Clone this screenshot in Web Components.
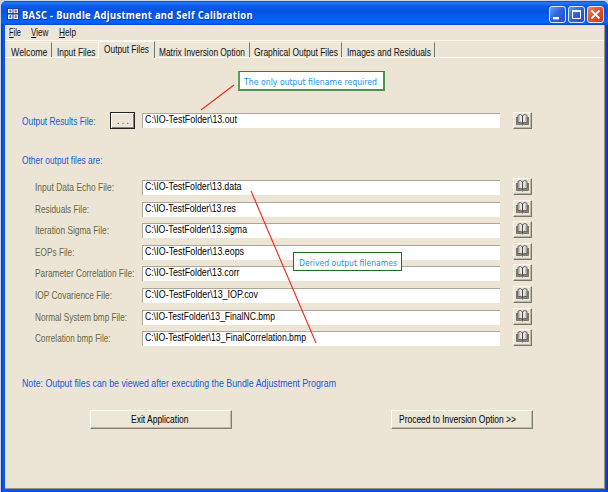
<!DOCTYPE html>
<html lang="en">
<head>
<meta charset="utf-8">
<title>BASC</title>
<style>
html,body{margin:0;width:608px;height:492px;overflow:hidden;background:#c9d3e6;font-family:"Liberation Sans",Arial,sans-serif;font-size:11px}
</style>
</head>
<body>
<basc-window></basc-window>
<script>
class Base extends HTMLElement{
  draw(html){ if(!this.shadowRoot) this.attachShadow({mode:'open'}).innerHTML=html; }
}

/* Single line of text condensed or stretched to the width in "w". */
customElements.define('fit-text',class extends Base{
  connectedCallback(){
    const w=+this.getAttribute('w');
    this.draw(`<style>:host{display:block;flex:none;width:${w}px;height:14px;line-height:14px;white-space:pre}
      span{display:inline-block;transform-origin:0 0}</style><span><slot></slot></span>`);
    const s=this.shadowRoot.querySelector('span');
    s.style.transform=`scaleX(${w/s.getBoundingClientRect().width})`;
  }
});

customElements.define('caption-button',class extends Base{
  connectedCallback(){
    const k=this.getAttribute('kind');
    const glyph={
      min:'<rect x="4" y="11" width="6" height="2.4" fill="#fff"/>',
      max:'<path d="M4.500 4.500h8v8h-8z" fill="none" stroke="#fff"/><path d="M4 5h9" stroke="#fff" stroke-width="2"/>',
      close:'<path d="M4.500 4.500l8 8M12.500 4.500l-8 8" stroke="#fff" stroke-width="1.8"/>'}[k];
    const bg=k==='close'?'linear-gradient(135deg,#ee8a68,#e2512c 45%,#c83c18)':'linear-gradient(135deg,#6c98f4,#2b62de 50%,#1d50cc)';
    this.draw(`<style>:host{display:block;box-sizing:border-box;width:17px;height:17px;border:1px solid #dfe8fb;border-radius:3px;background:${bg}}
      svg{display:block;margin:-1px}</style><svg width="17" height="17">${glyph}</svg>`);
  }
});

customElements.define('title-bar',class extends Base{
  connectedCallback(){
    this.draw(`<style>:host{display:flex;align-items:flex-start;height:24px;box-sizing:border-box;padding:5px 4px 0 6px;border-radius:5px 5px 0 0;
      background:linear-gradient(#0b47c4 0,#2b7bf3 8%,#0a5be6 20%,#0353e0 45%,#0560f5 75%,#0464fb 90%,#0348cd 100%);
      color:#fff;font:bold 11px "Noto Sans","Open Sans",sans-serif;letter-spacing:.4px;text-shadow:1px 1px #0a3596}
      .icon{margin:2px 3px 0 0;flex:none}.title{margin-top:2px;flex:1}.btns{display:flex;gap:2px}</style>
      <svg class="icon" width="12" height="12"><path d="M0 0h12v12H0z" fill="#1c3f9c"/><path d="M1 1h4.500v4H1zM6.500 1H11v4H6.500zM1 6.500h4.500v4.500H1zM6.500 6.500H11v4.500H6.500z" fill="#f2f4fc"/><path d="M2 3h2.500M7.500 3H10M2 9h2.500M7.500 9H10" stroke="#b7422e"/><path d="M3.300 1.500v3M8.800 1.500v3M3.300 7v3M8.800 7v3" stroke="#3557b5"/></svg>
      <div class="title"><fit-text w="231">BASC - Bundle Adjustment and Self Calibration</fit-text></div>
      <div class="btns"><caption-button kind="min"></caption-button><caption-button kind="max"></caption-button><caption-button kind="close"></caption-button></div>`);
  }
});

customElements.define('menu-bar',class extends Base{
  connectedCallback(){
    this.draw(`<style>:host{display:flex;box-sizing:border-box;height:16px;gap:10px;padding:0 4px;border-bottom:1px solid #fbf9f2}</style>
      <fit-text w="12"><u>F</u>ile</fit-text><fit-text w="17.500"><u>V</u>iew</fit-text><fit-text w="17"><u>H</u>elp</fit-text>`);
  }
});

customElements.define('tab-item',class extends Base{
  connectedCallback(){
    const on=this.hasAttribute('selected');
    this.draw(`<style>:host{display:block;box-sizing:border-box;width:${this.getAttribute('width')}px;height:${on?17:15}px;
      padding:${on?0:2}px 0 0 ${this.getAttribute('pad')}px;background:${on?'#ece5d6':'#ede7da'};border-top:1px solid ${on?'#fffdf8':'#f3eee3'};
      border-right:${this.hasAttribute('edge')?'1px solid #76736a':'0'};
      ${on?'border-left:1px solid #fffdf8;margin-bottom:-1px;':''}}</style><fit-text w="${this.getAttribute('w')}"><slot></slot></fit-text>`);
  }
});

customElements.define('tab-strip',class extends Base{
  connectedCallback(){
    this.draw(`<style>:host{display:flex;align-items:flex-end;box-sizing:border-box;height:17px;border-bottom:1px solid #fffdf8}</style>
      <tab-item width="47" pad="5.500" w="36.500" edge>Welcome</tab-item>
      <tab-item width="46" pad="4.500" w="38.500">Input Files</tab-item>
      <tab-item width="57" pad="5" w="45" selected edge>Output Files</tab-item>
      <tab-item width="95" pad="3.500" w="86" edge>Matrix Inversion Option</tab-item>
      <tab-item width="92" pad="4" w="84" edge>Graphical Output Files</tab-item>
      <tab-item width="93" pad="5" w="84" edge>Images and Residuals</tab-item>`);
  }
});

customElements.define('book-button',class extends Base{
  connectedCallback(){
    this.draw(`<style>:host{display:block;box-sizing:border-box;width:19px;height:17px;flex:none;background:#ebe6d6;border:1px solid;border-color:#fbf9f0 #77756b #77756b #fbf9f0;box-shadow:inset -1px -1px #bdb8a8}
      svg{display:block;margin:0 0 0 1px}</style>
      <svg width="15" height="13"><path d="M1.500 4v7.500h5l1 .8 1-.8h5V4" fill="#8d8b86" stroke="#77756f"/><path d="M3 10V2.300Q5.500.5 7.500 2.800 9.500.5 12 2.300V10Q9.500 8.300 7.500 10.500 5.500 8.300 3 10z" fill="#e6e5e0" stroke="#5a5955"/><path d="M7.500 2.800v8.500" stroke="#4a4946"/><path d="M4.500 3.500v5M10.500 3.500v5" stroke="#c4c2bb"/></svg>`);
  }
});

customElements.define('path-field',class extends Base{
  connectedCallback(){
    this.draw(`<style>:host{display:block;box-sizing:border-box;width:358px;height:15px;padding-left:2px;flex:none;background:#fff;border-top:1px solid #aaa69a;border-left:1px solid #aaa69a;color:#000}
      fit-text{margin-top:-2px}</style><fit-text w="${this.getAttribute('w')}"><slot></slot></fit-text>`);
  }
});

customElements.define('file-row',class extends Base{
  connectedCallback(){
    const g=n=>this.getAttribute(n);
    this.draw(`<style>:host{display:flex;align-items:flex-start;height:17px}
      .label{width:107px;margin-top:2px;color:#68663f}path-field{margin:2px 13px 0 0}</style>
      <div class="label"><fit-text w="${g('lw')}">${g('label')}</fit-text></div><path-field w="${g('vw')}"><slot></slot></path-field><book-button></book-button>`);
  }
});

customElements.define('push-button',class extends Base{
  connectedCallback(){
    this.draw(`<style>:host{display:flex;box-sizing:border-box;width:142px;height:19px;padding:1px 0 0 ${this.getAttribute('pad')}px;color:#000;background:#ece6d7;border:1px solid;border-color:#fffdf6 #7f7c70 #7f7c70 #fffdf6;box-shadow:inset -1px -1px #c0baa8}</style>
      <fit-text w="${this.getAttribute('w')}"><slot></slot></fit-text>`);
  }
});

/* Annotation box placed over the form. */
customElements.define('call-out',class extends Base{
  connectedCallback(){
    const [x,y,w,h]=this.getAttribute('box').split(' ');
    this.draw(`<style>:host{display:block;position:absolute;left:${x}px;top:${y}px;width:${w}px;height:${h}px;box-sizing:border-box;background:#fff;border:solid;border-width:${this.getAttribute('edge')};border-color:${this.getAttribute('tone')};padding:${this.getAttribute('pad')};color:#1c8fec;font:9.5px "DejaVu Sans",Verdana,sans-serif}</style>
      <fit-text w="${this.getAttribute('w')}"><slot></slot></fit-text>`);
  }
});

customElements.define('output-page',class extends Base{
  connectedCallback(){
    const rows=[['Input Data Echo File:',79,'13.data',96.5],['Residuals File:',54,'13.res',91],['Iteration Sigma File:',74,'13.sigma',102],['EOPs File:',39.5,'13.eops',99],['Parameter Correlation File:',99.5,'13.corr',94.5],['IOP Covarience File:',77,'13_IOP.cov',113],['Normal System bmp File:',92,'13_FinalNC.bmp',130],['Correlation bmp File:',75.5,'13_FinalCorrelation.bmp',161]];
    this.draw(`<style>:host{display:block;height:430px;box-sizing:border-box;padding:54px 0 0 17px;color:#1559d6}
      .main{display:flex;align-items:flex-start;height:17px}
      .main>fit-text{margin:2px 14.500px 0 0}
      .browse{box-sizing:border-box;width:25px;height:17px;margin-right:7px;border:1px solid #222;box-shadow:inset 1px 1px #fff,inset -1px -1px #85827a;color:#222;padding-left:6px}
      .browse fit-text{margin-top:0}
      path-field{margin:1px 13px 0 0}
      .heading{margin-top:24px}
      .rows{display:grid;grid-auto-rows:21.600px;margin:11px 0 0 13px;height:173px}
      .note{margin-top:25px}
      .actions{display:flex;gap:159px;margin:20px 0 0 68px}
      </style>
      <div class="main"><fit-text w="73.500">Output Results File:</fit-text><div class="browse"><fit-text w="12">. . .</fit-text></div><path-field w="92">C:\\IO-TestFolder\\13.out</path-field><book-button></book-button></div>
      <fit-text class="heading" w="80.500">Other output files are:</fit-text>
      <div class="rows">${rows.map(r=>`<file-row label="${r[0]}" lw="${r[1]}" vw="${r[3]}">C:\\IO-TestFolder\\${r[2]}</file-row>`).join('')}</div>
      <fit-text class="note" w="314">Note: Output files can be viewed after executing the Bundle Adjustment Program</fit-text>
      <div class="actions"><push-button pad="40" w="57.500">Exit Application</push-button><push-button pad="7" w="117">Proceed to Inversion Option &gt;&gt;</push-button></div>`);
  }
});

customElements.define('basc-window',class extends Base{
  connectedCallback(){
    this.draw(`<style>:host{display:block;position:relative;width:608px;height:492px;box-sizing:border-box;padding:1px 0 0 1px;color:#111}
      .frame{box-sizing:border-box;height:491px;border-radius:6px 6px 0 0;background:linear-gradient(90deg,#0a35b8 0,#0a55ee 2px,#0a50ea 604px,#0430b8 607px);padding-bottom:3px}
      .client{box-sizing:border-box;margin:0 3px 0 4px;height:464px;background:#ece5d6;border-right:1px solid #99937f;border-bottom:1px solid #99937f}
      svg{position:absolute;left:0;top:0}</style>
      <div class="frame"><title-bar></title-bar><div class="client"><menu-bar></menu-bar><tab-strip></tab-strip><output-page></output-page></div></div>
      <call-out box="238 71 147 20" edge="1px 2px 2px 2px" tone="#2c8433 #4c944c #4c944c #5d9f5c" pad="3px 0 0 3.500px" w="133">The only output filename required</call-out>
      <svg width="608" height="492" fill="none" stroke="#ee2a22" stroke-width="1.1"><path d="M234 85L201 110M251 191L316 343"/></svg>
      <call-out box="293 252 109 19" edge="1px" tone="#1a6e1f" pad="3px 0 0 5px" w="98">Derived output filenames</call-out>`);
  }
});
</script>
</body>
</html>
